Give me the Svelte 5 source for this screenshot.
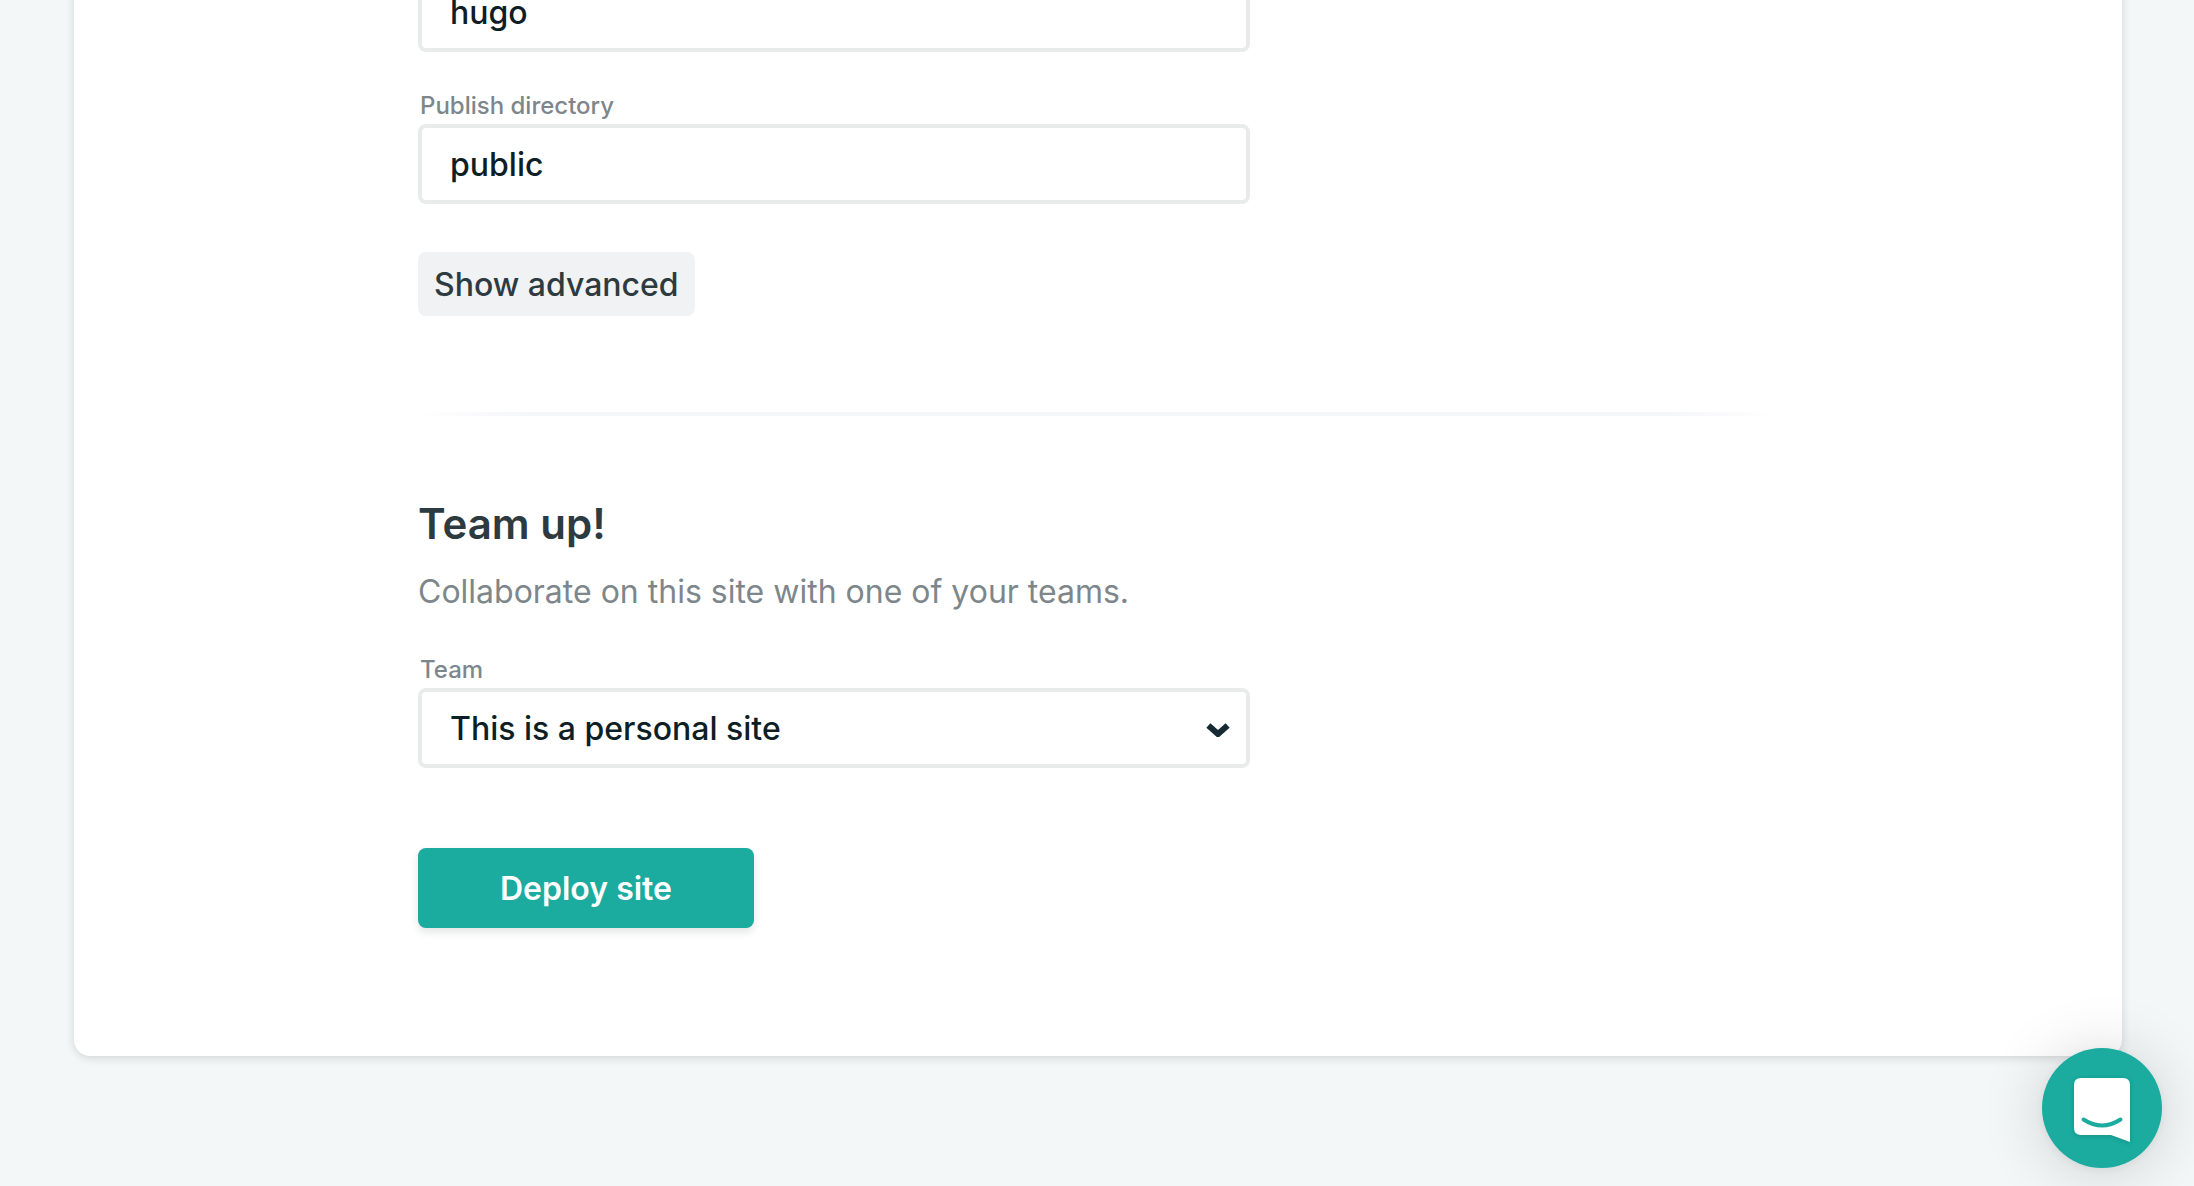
<script>
  let command = $state('hugo');
  let directory = $state('public');
  let team = $state('personal');
</script>

<main class="page">
  <form class="card" onsubmit={(e) => e.preventDefault()}>
    <div class="content">
      <section class="build">
        <input class="control" type="text" aria-label="Build command" bind:value={command} />
        <div class="field">
          <label for="directory">Publish directory</label>
          <input id="directory" class="control" type="text" bind:value={directory} />
        </div>
        <button class="secondary" type="button">Show advanced</button>
      </section>

      <hr />

      <section>
        <h2>Team up!</h2>
        <p>Collaborate on this site with one of your teams.</p>
        <div class="field">
          <label for="team">Team</label>
          <div class="select">
            <select id="team" class="control" bind:value={team}>
              <option value="personal">This is a personal site</option>
            </select>
            <svg viewBox="0 0 24 14" aria-hidden="true">
              <path d="M2.4 2.4 12 11 21.6 2.4" />
            </svg>
          </div>
        </div>
      </section>

      <button class="primary" type="submit">Deploy site</button>
    </div>
  </form>
</main>

<button class="chat" type="button" aria-label="Open chat">
  <svg viewBox="0 0 56 64" aria-hidden="true">
    <path class="bubble" d="M7 0H49Q56 0 56 7V64L37 57H7Q0 57 0 50V7Q0 0 7 0Z" />
    <path class="smile" d="M9.5 41.5Q28 53.5 46.5 41.5" />
  </svg>
</button>

<style>
  :global(body) {
    background: #f3f7f8;
  }

  .page,
  .page *,
  .chat {
    box-sizing: border-box;
  }

  .page {
    padding: 0 72px 130px 74px;
    overflow: hidden;
    font-family: Inter, 'Liberation Sans', sans-serif;
    font-size: 32px;
    color: #2d3b41;
  }

  .card {
    margin-top: -44px;
    padding: 16px 48px 128px;
    background: #fff;
    border-radius: 16px;
    box-shadow: 0 2px 8px rgba(30, 40, 40, 0.16);
  }

  .content {
    display: flex;
    flex-direction: column;
    align-items: flex-start;
    max-width: 1360px;
    margin: 0 auto;
  }

  section {
    width: 100%;
    max-width: 832px;
  }

  .field {
    display: flex;
    flex-direction: column;
    margin-top: 36px;
  }

  label {
    padding-left: 2px;
    font-size: 24px;
    font-weight: 500;
    line-height: 36px;
    color: #7d878b;
  }

  .control {
    display: block;
    width: 100%;
    height: 80px;
    margin: 0;
    padding: 0 28px;
    appearance: none;
    background: #fff;
    border: 4px solid #e9ebeb;
    border-radius: 8px;
    font: inherit;
    font-weight: 500;
    color: #0e1e25;
  }

  .select {
    position: relative;
  }

  .select svg {
    position: absolute;
    top: 35px;
    right: 20px;
    width: 24px;
    height: 14px;
    fill: none;
    stroke: #152a33;
    stroke-width: 6;
    pointer-events: none;
  }

  button {
    border: 0;
    font: inherit;
    cursor: pointer;
  }

  .secondary {
    height: 64px;
    margin-top: 48px;
    padding: 0 16px;
    background: #f0f2f4;
    border-radius: 8px;
    font-weight: 500;
    color: #2d3b41;
  }

  hr {
    width: 100%;
    height: 4px;
    margin: 96px 0 80px;
    border: 0;
    background: linear-gradient(to right, #fff, #f5f6f9 8%, #f5f6f9 92%, #fff);
  }

  h2 {
    margin: 0;
    font-size: 42px;
    font-weight: 600;
    line-height: 56px;
  }

  p {
    margin: 16px 0 0;
    line-height: 48px;
    color: #7d878b;
  }

  .primary {
    height: 80px;
    min-width: 336px;
    margin-top: 80px;
    padding: 0 48px;
    background: #1bab9f;
    border-radius: 8px;
    box-shadow: 0 4px 8px rgba(14, 30, 37, 0.12);
    font-weight: 600;
    color: #fff;
  }

  .chat {
    position: fixed;
    right: 32px;
    bottom: 18px;
    display: grid;
    place-items: center;
    width: 120px;
    height: 120px;
    padding: 4px 0 0;
    background: #1bab9f;
    border-radius: 50%;
    box-shadow: 0 2px 12px rgba(0, 0, 0, 0.06), 0 4px 64px rgba(0, 0, 0, 0.16);
  }

  .chat svg {
    width: 56px;
    height: 64px;
    overflow: visible;
    filter: drop-shadow(0 1px 2px rgba(0, 0, 0, 0.15));
  }

  .bubble {
    fill: #fff;
  }

  .smile {
    fill: none;
    stroke: #1bab9f;
    stroke-width: 4;
    stroke-linecap: round;
  }
</style>
